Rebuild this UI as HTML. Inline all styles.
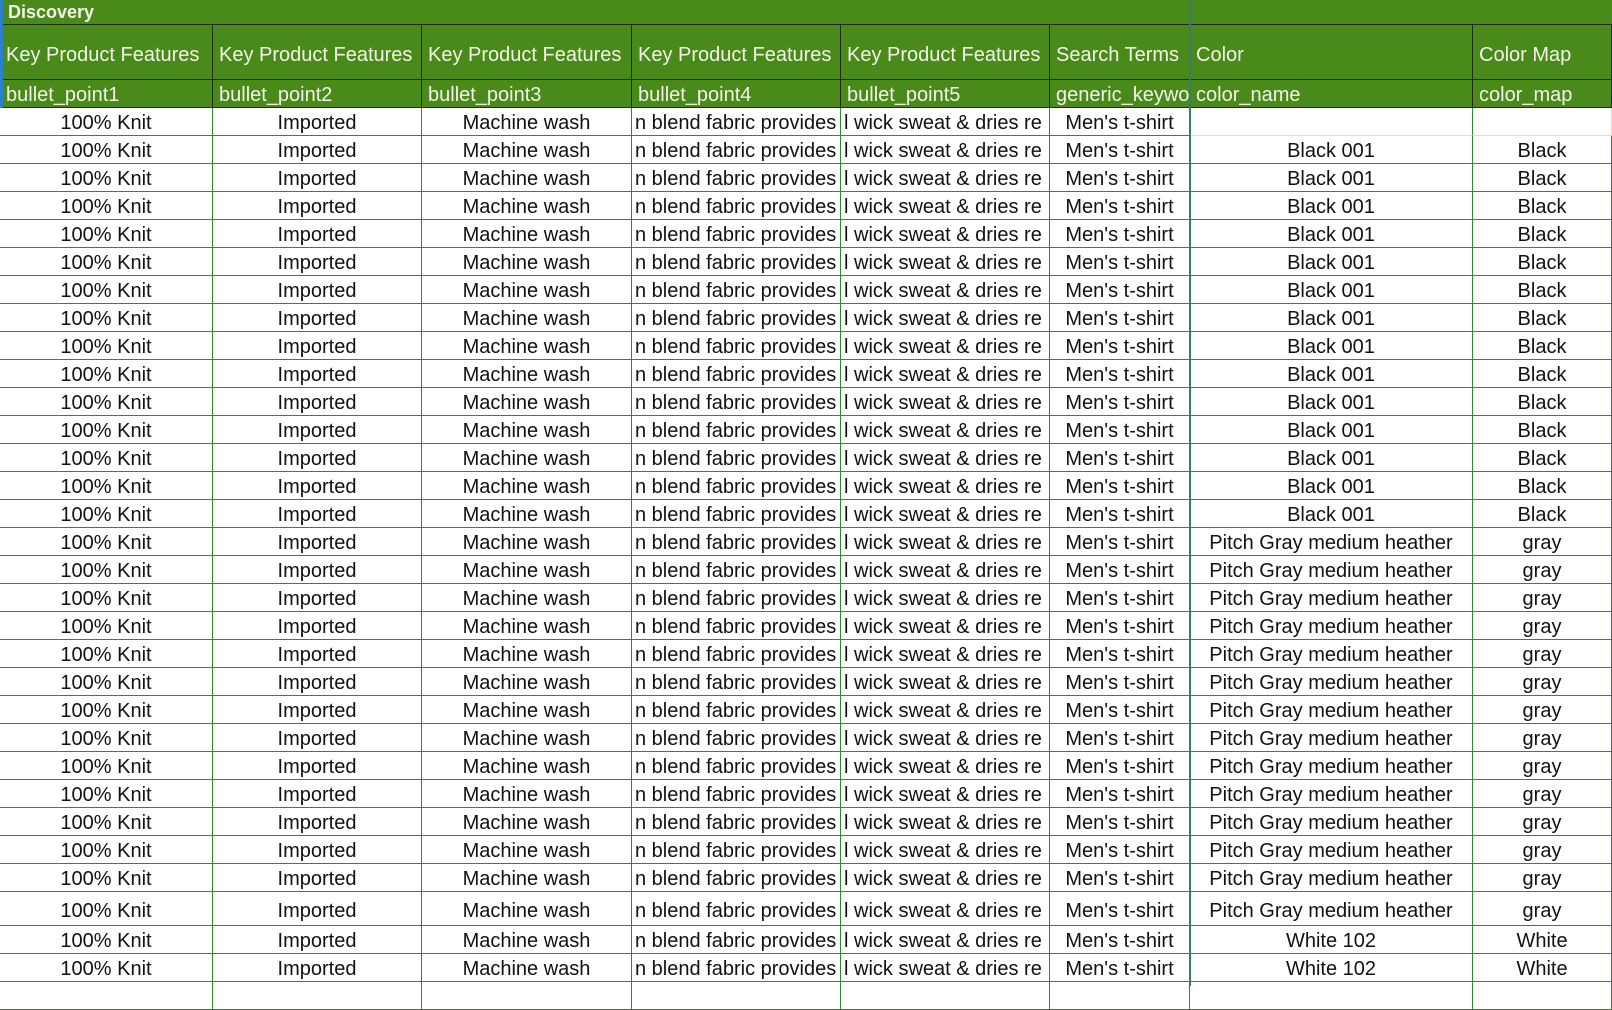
<!DOCTYPE html>
<html><head><meta charset="utf-8"><style>
*{margin:0;padding:0;box-sizing:border-box}
body{width:1612px;height:986px;overflow:hidden;background:#fff;font-family:"Liberation Sans",Arial,sans-serif;position:relative}
.band{position:absolute;left:0;top:0;width:1612px;height:25px;background:#4a8a1a;border-bottom:1px solid #1d2d10}
.band span{position:absolute;left:8px;top:2px;color:#f4f4e8;font-weight:bold;font-size:18px}
.r{position:absolute;left:0;width:1612px;display:flex}
.r div{height:100%;border-right:1px solid #2f8a2f;border-bottom:1px solid #2f8a2f;white-space:nowrap;overflow:hidden;font-size:20px;color:#111;text-align:center;line-height:31px}
.h div{background:#4a8a1a;color:#f2f5e6;text-align:left;padding-left:6px;border-color:#1d2d10}
.c1{width:213px}.c2{width:209px}.c3{width:210px}.c4{width:209px}.c5{width:209px}.c6{width:140px}.c7{width:283px}.c8{width:139px}
.r div.c4,.r div.c5{text-align:left;padding-left:3px}
.h div.c4,.h div.c5{padding-left:6px}
.vl{position:absolute;left:1189px;top:0;width:2px;height:986px;background:#3a7a6a}
.bl{position:absolute;left:0;top:0;width:3px;height:108px;background:#2a7fd0}
.t div{line-height:39px}
.hh div{line-height:60px}
</style></head><body>
<div class="band"><span>Discovery</span></div>
<div class="r h hh" style="top:25px;height:55px"><div class="c1">Key Product Features</div><div class="c2">Key Product Features</div><div class="c3">Key Product Features</div><div class="c4">Key Product Features</div><div class="c5">Key Product Features</div><div class="c6">Search Terms</div><div class="c7">Color</div><div class="c8">Color Map</div></div>
<div class="r h" style="top:80px;height:28px"><div class="c1">bullet_point1</div><div class="c2">bullet_point2</div><div class="c3">bullet_point3</div><div class="c4">bullet_point4</div><div class="c5">bullet_point5</div><div class="c6">generic_keywords</div><div class="c7">color_name</div><div class="c8">color_map</div></div>

<div class="r" style="top:108px;height:28px"><div class="c1">100% Knit</div><div class="c2">Imported</div><div class="c3">Machine wash</div><div class="c4">n blend fabric provides</div><div class="c5">l wick sweat &amp; dries re</div><div class="c6">Men's t-shirt</div><div class="c7" style="border-bottom-color:#ddd"></div><div class="c8" style="border-bottom-color:#ddd;border-right-color:#ddd"></div></div>
<div class="r" style="top:136px;height:28px"><div class="c1">100% Knit</div><div class="c2">Imported</div><div class="c3">Machine wash</div><div class="c4">n blend fabric provides</div><div class="c5">l wick sweat &amp; dries re</div><div class="c6">Men's t-shirt</div><div class="c7">Black 001</div><div class="c8">Black</div></div>
<div class="r" style="top:164px;height:28px"><div class="c1">100% Knit</div><div class="c2">Imported</div><div class="c3">Machine wash</div><div class="c4">n blend fabric provides</div><div class="c5">l wick sweat &amp; dries re</div><div class="c6">Men's t-shirt</div><div class="c7">Black 001</div><div class="c8">Black</div></div>
<div class="r" style="top:192px;height:28px"><div class="c1">100% Knit</div><div class="c2">Imported</div><div class="c3">Machine wash</div><div class="c4">n blend fabric provides</div><div class="c5">l wick sweat &amp; dries re</div><div class="c6">Men's t-shirt</div><div class="c7">Black 001</div><div class="c8">Black</div></div>
<div class="r" style="top:220px;height:28px"><div class="c1">100% Knit</div><div class="c2">Imported</div><div class="c3">Machine wash</div><div class="c4">n blend fabric provides</div><div class="c5">l wick sweat &amp; dries re</div><div class="c6">Men's t-shirt</div><div class="c7">Black 001</div><div class="c8">Black</div></div>
<div class="r" style="top:248px;height:28px"><div class="c1">100% Knit</div><div class="c2">Imported</div><div class="c3">Machine wash</div><div class="c4">n blend fabric provides</div><div class="c5">l wick sweat &amp; dries re</div><div class="c6">Men's t-shirt</div><div class="c7">Black 001</div><div class="c8">Black</div></div>
<div class="r" style="top:276px;height:28px"><div class="c1">100% Knit</div><div class="c2">Imported</div><div class="c3">Machine wash</div><div class="c4">n blend fabric provides</div><div class="c5">l wick sweat &amp; dries re</div><div class="c6">Men's t-shirt</div><div class="c7">Black 001</div><div class="c8">Black</div></div>
<div class="r" style="top:304px;height:28px"><div class="c1">100% Knit</div><div class="c2">Imported</div><div class="c3">Machine wash</div><div class="c4">n blend fabric provides</div><div class="c5">l wick sweat &amp; dries re</div><div class="c6">Men's t-shirt</div><div class="c7">Black 001</div><div class="c8">Black</div></div>
<div class="r" style="top:332px;height:28px"><div class="c1">100% Knit</div><div class="c2">Imported</div><div class="c3">Machine wash</div><div class="c4">n blend fabric provides</div><div class="c5">l wick sweat &amp; dries re</div><div class="c6">Men's t-shirt</div><div class="c7">Black 001</div><div class="c8">Black</div></div>
<div class="r" style="top:360px;height:28px"><div class="c1">100% Knit</div><div class="c2">Imported</div><div class="c3">Machine wash</div><div class="c4">n blend fabric provides</div><div class="c5">l wick sweat &amp; dries re</div><div class="c6">Men's t-shirt</div><div class="c7">Black 001</div><div class="c8">Black</div></div>
<div class="r" style="top:388px;height:28px"><div class="c1">100% Knit</div><div class="c2">Imported</div><div class="c3">Machine wash</div><div class="c4">n blend fabric provides</div><div class="c5">l wick sweat &amp; dries re</div><div class="c6">Men's t-shirt</div><div class="c7">Black 001</div><div class="c8">Black</div></div>
<div class="r" style="top:416px;height:28px"><div class="c1">100% Knit</div><div class="c2">Imported</div><div class="c3">Machine wash</div><div class="c4">n blend fabric provides</div><div class="c5">l wick sweat &amp; dries re</div><div class="c6">Men's t-shirt</div><div class="c7">Black 001</div><div class="c8">Black</div></div>
<div class="r" style="top:444px;height:28px"><div class="c1">100% Knit</div><div class="c2">Imported</div><div class="c3">Machine wash</div><div class="c4">n blend fabric provides</div><div class="c5">l wick sweat &amp; dries re</div><div class="c6">Men's t-shirt</div><div class="c7">Black 001</div><div class="c8">Black</div></div>
<div class="r" style="top:472px;height:28px"><div class="c1">100% Knit</div><div class="c2">Imported</div><div class="c3">Machine wash</div><div class="c4">n blend fabric provides</div><div class="c5">l wick sweat &amp; dries re</div><div class="c6">Men's t-shirt</div><div class="c7">Black 001</div><div class="c8">Black</div></div>
<div class="r" style="top:500px;height:28px"><div class="c1">100% Knit</div><div class="c2">Imported</div><div class="c3">Machine wash</div><div class="c4">n blend fabric provides</div><div class="c5">l wick sweat &amp; dries re</div><div class="c6">Men's t-shirt</div><div class="c7">Black 001</div><div class="c8">Black</div></div>
<div class="r" style="top:528px;height:28px"><div class="c1">100% Knit</div><div class="c2">Imported</div><div class="c3">Machine wash</div><div class="c4">n blend fabric provides</div><div class="c5">l wick sweat &amp; dries re</div><div class="c6">Men's t-shirt</div><div class="c7">Pitch Gray medium heather</div><div class="c8">gray</div></div>
<div class="r" style="top:556px;height:28px"><div class="c1">100% Knit</div><div class="c2">Imported</div><div class="c3">Machine wash</div><div class="c4">n blend fabric provides</div><div class="c5">l wick sweat &amp; dries re</div><div class="c6">Men's t-shirt</div><div class="c7">Pitch Gray medium heather</div><div class="c8">gray</div></div>
<div class="r" style="top:584px;height:28px"><div class="c1">100% Knit</div><div class="c2">Imported</div><div class="c3">Machine wash</div><div class="c4">n blend fabric provides</div><div class="c5">l wick sweat &amp; dries re</div><div class="c6">Men's t-shirt</div><div class="c7">Pitch Gray medium heather</div><div class="c8">gray</div></div>
<div class="r" style="top:612px;height:28px"><div class="c1">100% Knit</div><div class="c2">Imported</div><div class="c3">Machine wash</div><div class="c4">n blend fabric provides</div><div class="c5">l wick sweat &amp; dries re</div><div class="c6">Men's t-shirt</div><div class="c7">Pitch Gray medium heather</div><div class="c8">gray</div></div>
<div class="r" style="top:640px;height:28px"><div class="c1">100% Knit</div><div class="c2">Imported</div><div class="c3">Machine wash</div><div class="c4">n blend fabric provides</div><div class="c5">l wick sweat &amp; dries re</div><div class="c6">Men's t-shirt</div><div class="c7">Pitch Gray medium heather</div><div class="c8">gray</div></div>
<div class="r" style="top:668px;height:28px"><div class="c1">100% Knit</div><div class="c2">Imported</div><div class="c3">Machine wash</div><div class="c4">n blend fabric provides</div><div class="c5">l wick sweat &amp; dries re</div><div class="c6">Men's t-shirt</div><div class="c7">Pitch Gray medium heather</div><div class="c8">gray</div></div>
<div class="r" style="top:696px;height:28px"><div class="c1">100% Knit</div><div class="c2">Imported</div><div class="c3">Machine wash</div><div class="c4">n blend fabric provides</div><div class="c5">l wick sweat &amp; dries re</div><div class="c6">Men's t-shirt</div><div class="c7">Pitch Gray medium heather</div><div class="c8">gray</div></div>
<div class="r" style="top:724px;height:28px"><div class="c1">100% Knit</div><div class="c2">Imported</div><div class="c3">Machine wash</div><div class="c4">n blend fabric provides</div><div class="c5">l wick sweat &amp; dries re</div><div class="c6">Men's t-shirt</div><div class="c7">Pitch Gray medium heather</div><div class="c8">gray</div></div>
<div class="r" style="top:752px;height:28px"><div class="c1">100% Knit</div><div class="c2">Imported</div><div class="c3">Machine wash</div><div class="c4">n blend fabric provides</div><div class="c5">l wick sweat &amp; dries re</div><div class="c6">Men's t-shirt</div><div class="c7">Pitch Gray medium heather</div><div class="c8">gray</div></div>
<div class="r" style="top:780px;height:28px"><div class="c1">100% Knit</div><div class="c2">Imported</div><div class="c3">Machine wash</div><div class="c4">n blend fabric provides</div><div class="c5">l wick sweat &amp; dries re</div><div class="c6">Men's t-shirt</div><div class="c7">Pitch Gray medium heather</div><div class="c8">gray</div></div>
<div class="r" style="top:808px;height:28px"><div class="c1">100% Knit</div><div class="c2">Imported</div><div class="c3">Machine wash</div><div class="c4">n blend fabric provides</div><div class="c5">l wick sweat &amp; dries re</div><div class="c6">Men's t-shirt</div><div class="c7">Pitch Gray medium heather</div><div class="c8">gray</div></div>
<div class="r" style="top:836px;height:28px"><div class="c1">100% Knit</div><div class="c2">Imported</div><div class="c3">Machine wash</div><div class="c4">n blend fabric provides</div><div class="c5">l wick sweat &amp; dries re</div><div class="c6">Men's t-shirt</div><div class="c7">Pitch Gray medium heather</div><div class="c8">gray</div></div>
<div class="r" style="top:864px;height:28px"><div class="c1">100% Knit</div><div class="c2">Imported</div><div class="c3">Machine wash</div><div class="c4">n blend fabric provides</div><div class="c5">l wick sweat &amp; dries re</div><div class="c6">Men's t-shirt</div><div class="c7">Pitch Gray medium heather</div><div class="c8">gray</div></div>
<div class="r t" style="top:892px;height:34px"><div class="c1">100% Knit</div><div class="c2">Imported</div><div class="c3">Machine wash</div><div class="c4">n blend fabric provides</div><div class="c5">l wick sweat &amp; dries re</div><div class="c6">Men's t-shirt</div><div class="c7">Pitch Gray medium heather</div><div class="c8">gray</div></div>
<div class="r" style="top:926px;height:28px"><div class="c1">100% Knit</div><div class="c2">Imported</div><div class="c3">Machine wash</div><div class="c4">n blend fabric provides</div><div class="c5">l wick sweat &amp; dries re</div><div class="c6">Men's t-shirt</div><div class="c7">White 102</div><div class="c8">White</div></div>
<div class="r" style="top:954px;height:28px"><div class="c1">100% Knit</div><div class="c2">Imported</div><div class="c3">Machine wash</div><div class="c4">n blend fabric provides</div><div class="c5">l wick sweat &amp; dries re</div><div class="c6">Men's t-shirt</div><div class="c7">White 102</div><div class="c8">White</div></div>
<div class="r" style="top:982px;height:28px"><div class="c1"></div><div class="c2"></div><div class="c3"></div><div class="c4"></div><div class="c5"></div><div class="c6"></div><div class="c7"></div><div class="c8"></div></div>
<div class="vl"></div>
<div class="bl"></div>
</body></html>
